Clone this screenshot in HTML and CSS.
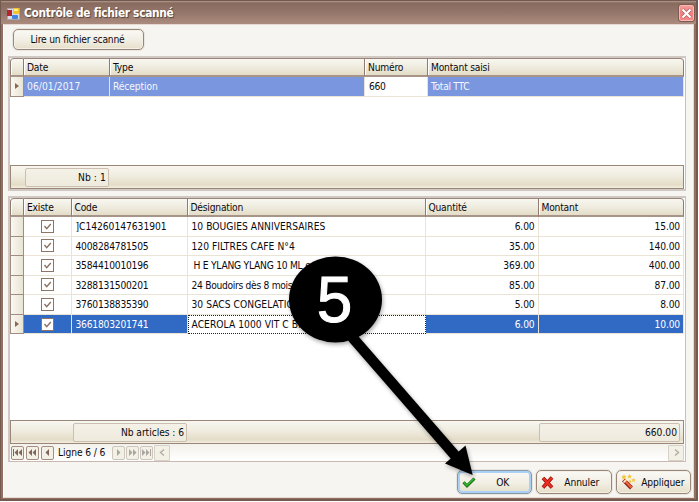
FILE: index.html
```html
<!DOCTYPE html>
<html lang="fr">
<head>
<meta charset="utf-8">
<title>Contrôle de fichier scanné</title>
<link rel="stylesheet" href="styles.css">
</head>
<body>
<div class="window">
  <header class="titlebar">
    <svg class="app-icon" width="13" height="13" viewBox="0 0 13 13"><rect x="0.5" y="1.5" width="12" height="11" fill="#d9dce4" stroke="#a9a6ac"/><rect x="0" y="3" width="5" height="6" fill="#b3262c"/><rect x="6" y="1" width="6" height="6" rx="1" fill="#f6c629"/><path d="M7 2h4v2H7z" fill="#fff08a"/><rect x="5" y="8" width="6" height="4" rx="1" fill="#3f86e2"/></svg>
    <h1>Contrôle de fichier scanné</h1>
    <button class="close" aria-label="Fermer"><svg width="15" height="15" viewBox="0 0 15 15"><path d="M3.5 3.5l8 8M11.5 3.5l-8 8" stroke="#a85c5a" stroke-width="3.4"/><path d="M3.5 3.5l8 8M11.5 3.5l-8 8" stroke="#fff" stroke-width="2.2"/></svg></button>
  </header>
  <main class="client">
    <button class="btn read">Lire un fichier scanné</button>

    <section class="panel files">
      <div class="row head"><span></span><span>Date</span><span>Type</span><span>Numéro</span><span>Montant saisi</span></div>
      <div class="row file"><span class="ind"><i></i></span><span class="date">06/01/2017</span><span class="type">Réception</span><span class="edit">660</span><span>Total TTC</span></div>
      <div class="space"></div>
      <div class="foot"><span class="sum nb">Nb : 1</span></div>
    </section>

    <section class="panel items">
      <div class="row head"><span></span><span>Existe</span><span>Code</span><span>Désignation</span><span>Quantité</span><span>Montant</span></div>
      <div class="row"><span class="ind"></span><span class="chk"><svg viewBox="0 0 11 11"><path d="M2.500 5l2.200 2.600L8.800 3"/></svg></span><span class="code wide">]C14260147631901</span><span class="caps">10 BOUGIES ANNIVERSAIRES</span><span class="num">6.00</span><span class="num">15.00</span></div>
      <div class="row"><span class="ind"></span><span class="chk"><svg viewBox="0 0 11 11"><path d="M2.500 5l2.200 2.600L8.800 3"/></svg></span><span class="code">4008284781505</span><span class="caps">120 FILTRES CAFE N°4</span><span class="num">35.00</span><span class="num">140.00</span></div>
      <div class="row"><span class="ind"></span><span class="chk"><svg viewBox="0 0 11 11"><path d="M2.500 5l2.200 2.600L8.800 3"/></svg></span><span class="code">3584410010196</span><span class="indent">H E YLANG YLANG 10 ML e</span><span class="num">369.00</span><span class="num">400.00</span></div>
      <div class="row"><span class="ind"></span><span class="chk"><svg viewBox="0 0 11 11"><path d="M2.500 5l2.200 2.600L8.800 3"/></svg></span><span class="code">3288131500201</span><span>24 Boudoirs dès 8 mois</span><span class="num">85.00</span><span class="num">87.00</span></div>
      <div class="row"><span class="ind"></span><span class="chk"><svg viewBox="0 0 11 11"><path d="M2.500 5l2.200 2.600L8.800 3"/></svg></span><span class="code">3760138835390</span><span class="caps">30 SACS CONGELATION</span><span class="num">5.00</span><span class="num">8.00</span></div>
      <div class="row selected"><span class="ind"><i></i></span><span class="chk"><svg viewBox="0 0 11 11"><path d="M2.500 5l2.200 2.600L8.800 3"/></svg></span><span class="code">3661803201741</span><span class="focus caps">ACEROLA 1000 VIT C BIO</span><span class="num">6.00</span><span class="num">10.00</span></div>
      <div class="space"></div>
      <div class="foot"><span class="sum articles">Nb articles : 6</span><span class="sum total">660.00</span></div>
      <div class="nav">
        <button><svg viewBox="0 0 11 11"><path d="M1 2h1v7H1zM6 2v7L2.5 5.500zM10 2v7L6.500 5.500z"/></svg></button>
        <button class="second"><svg viewBox="0 0 11 11"><path d="M5 2v7L1.500 5.500zM9 2v7L5.500 5.500z"/></svg></button>
        <button class="third"><svg viewBox="0 0 11 11"><path d="M7 2v7L3.500 5.500z"/></svg></button>
        <span class="line">Ligne 6 / 6</span>
        <button class="off"><svg viewBox="0 0 11 11"><path d="M4 2v7l3.500-3.500z"/></svg></button>
        <button class="off"><svg viewBox="0 0 11 11"><path d="M2 2v7l3.500-3.500zM6 2v7l3.500-3.500z"/></svg></button>
        <button class="off"><svg viewBox="0 0 11 11"><path d="M1 2v7l3.500-3.500zM5 2v7l3.500-3.500zM9 2h1v7H9z"/></svg></button>
        <button class="scroll"><svg viewBox="0 0 11 11"><path d="M7 2.500l-3.500 3L7 8.500"/></svg></button>
        <button class="scroll right"><svg viewBox="0 0 11 11"><path d="M4 2.500l3.500 3L4 8.500"/></svg></button>
      </div>
    </section>

    <footer class="actions">
      <button class="btn ok"><svg width="14" height="12" viewBox="0 0 14 12"><path d="M1.500 6.200L5 9.800 12.500 2.500" fill="none" stroke="#176b17" stroke-width="3"/><path d="M1.800 6.300L5 9.300 12 2.700" fill="none" stroke="#35b52f" stroke-width="1.600"/></svg><span>OK</span></button>
      <button class="btn cancel"><svg width="13" height="13" viewBox="0 0 13 13"><path d="M2 2l9 9.500M11 1.500L2 11.500" stroke="#8e1009" stroke-width="3.600"/><path d="M2 2l9 9.500M11 1.500L2 11.500" stroke="#ee2c20" stroke-width="2.200"/></svg><span>Annuler</span></button>
      <button class="btn apply"><svg width="16" height="16" viewBox="0 0 16 16"><path d="M2.500 6l8 8" stroke="#8e2418" stroke-width="4"/><path d="M3 6l7.500 7.500" stroke="#f0653f" stroke-width="2.200"/><path d="M2.500 8.500l3.500-3.500" stroke="#fff0cf" stroke-width="1.600"/><path d="M3 0l.8 1.900 1.900.3-1.400 1.300.3 2L3 4.500l-1.700 1 .3-2L.3 2.200l1.900-.3zM8.500 0l.7 1.500 1.700.2-1.200 1.100.3 1.700-1.500-.8-1.500.8.3-1.700L6.100 1.700l1.700-.2zM12.500 4l.7 1.300 1.500.2-1.100 1 .3 1.500-1.400-.7-1.400.7.3-1.500-1.100-1 1.500-.2zM9 5.500l.6 1.200 1.200.2-.9.9.2 1.200-1.100-.6-1.100.6.200-1.200-.9-.9 1.200-.2z" fill="#f5c63a"/></svg><span>Appliquer</span></button>
    </footer>
  </main>
</div>
<svg class="callout" width="699" height="502" viewBox="0 0 699 502">
  <path d="M352 337L459 460" stroke="#000" stroke-width="10.500"/>
  <path d="M472.700 475L465.500 445.500L445 463.500z"/>
  <ellipse cx="335.500" cy="299.500" rx="46.500" ry="43"/>
  <text x="334.500" y="322" text-anchor="middle">5</text>
</svg>
</body>
</html>
```
FILE: styles.css
```css
* { box-sizing: border-box; }
body { margin: 0; background: #fff; overflow: hidden; font: 10.2px/14px "DejaVu Sans Condensed", "DejaVu Sans", sans-serif; font-stretch: condensed; letter-spacing: -0.3px; color: #0c0a10; }
button { font: inherit; letter-spacing: inherit; color: inherit; padding: 0; margin: 0; }
.window { width: 698px; height: 501px; display: flex; flex-direction: column; background: #93705f; border: 1px solid #735a51; border-right-width: 2px; border-bottom-width: 2px; padding: 0 2px 1px; }
.titlebar { height: 23px; flex: none; display: flex; align-items: center; background: linear-gradient(#b59a8d 0, #876a5e 2px, #95766a 50%, #aa8b7d 100%); margin: 0 -2px; padding: 1px 1px 0 6px; }
.titlebar h1 { margin: 0 0 0 4px; font: bold 11.8px/16px "DejaVu Sans Condensed", "DejaVu Sans", sans-serif; font-stretch: condensed; letter-spacing: -0.3px; color: #fff; text-shadow: 1px 1px 1px #55413a; }
.close { margin-left: auto; width: 17px; height: 18px; border: 1px solid #7c5a52; border-radius: 3px; background: linear-gradient(#f5a19b, #f07f80 50%, #f58a88); box-shadow: inset 0 0 0 1px #fbb9b2; display: flex; align-items: center; justify-content: center; }
.client { flex: 1; min-height: 0; display: flex; flex-direction: column; background: #f6f5f1; border: 1px solid #e5d9d2; border-left-color: #fff; padding: 4px 8px 3px 4px; }
.btn { display: flex; align-items: center; border: 1px solid #9a8779; border-radius: 5px; background: linear-gradient(#faf9f5, #f1eee3 55%, #e5dec9); box-shadow: inset 0 0 0 1px #f3f0e5, 0 0 0 1px #e9e5df; }
.read { width: 131px; height: 22px; margin-left: 5px; padding: 1px 2px 0 0; justify-content: center; letter-spacing: -0.2px; }
.panel { width: 678px; flex: none; display: flex; flex-direction: column; background: #fff; border: 2px solid #d0c8c2; border-right: 1px solid #c9c1bb; padding: 0 1px 0 0; }
.files { height: 135px; margin-top: 6px; }
.items { height: 266px; margin-top: 5px; border-bottom: 1px solid #c9b9b1; }
.row { display: grid; height: 19.550px; flex: none; }
.files .row { grid-template-columns: 14px 86px 255px 63px 1fr; }
.items .row { grid-template-columns: 14px 47.500px 116px 238px 113px 1fr; }
.row > span { min-width: 0; white-space: nowrap; overflow: hidden; padding-left: 4px; border-right: 1px solid #e9e4d6; border-bottom: 1px solid #e9e4d6; line-height: 19px; }
.row.head { height: 19px; }
.row.head > span { border-top: 1px solid #9a857b; border-right: 1px solid #917a70; border-bottom: 2px solid #a8958a; background: linear-gradient(#f8f7f0, #efecdf 50%, #e4dcc7); box-shadow: inset 1px 0 #fff; line-height: 17px; padding-left: 3px; letter-spacing: -0.2px; }
.row.head > span:first-child { border-left: 1px solid #917a70; border-top-left-radius: 4px; }
.row.head > span:last-child { border-top-right-radius: 4px; }
.row > .ind { background: linear-gradient(90deg, #f9f8f2, #e9e4d4); border: 1px solid #a08c80; border-top: 0; padding: 0; display: flex; align-items: center; justify-content: center; }
.ind i { border-left: 4px solid #87695c; border-top: 3px solid transparent; border-bottom: 3px solid transparent; }
.row.file > span:not(.ind) { background: #7996df; color: #f4f6fd; padding-left: 3px; }
.row.file > .date { letter-spacing: 0.05px; }
.row.file > .type { letter-spacing: -0.1px; }
.row.file > .edit:not(.ind) { background: #fff; color: #0c0a10; padding-left: 4px; }
.space { flex: 1; }
.foot { height: 24px; flex: none; display: flex; align-items: center; border: 1px solid #9a8779; background: linear-gradient(#f8f7f0, #efecdf 45%, #e4dcc7 85%, #f1edde); }
.sum { height: 19px; line-height: 18px; border: 1px solid #cbbfb1; border-radius: 2px; text-align: right; padding-right: 2px; background: linear-gradient(#f4f1e7, #eeeadd); }
.sum.nb { width: 84px; margin-left: 14px; letter-spacing: 0.1px; }
.sum.articles { width: 114px; margin-left: 62px; letter-spacing: -0.05px; }
.sum.total { width: 141px; margin: 0 3px 0 auto; letter-spacing: 0; }
.row > .chk { display: flex; align-items: center; justify-content: center; padding: 0; }
.chk svg { width: 13px; height: 13px; border: 1px solid #8e7465; background: #fff; }
.chk path { fill: none; stroke: #8c7060; stroke-width: 1.400; }
.code { letter-spacing: -0.22px; }
.code.wide { letter-spacing: -0.03px; }
.caps { letter-spacing: 0.04px; }
.row > .indent { padding-left: 6px; letter-spacing: -0.25px; }
.row > .num { text-align: right; padding-right: 3px; letter-spacing: -0.15px; }
.selected > span:not(.ind) { background: #316ac5; color: #fff; }
.selected > .focus:not(.ind) { background: #fff; color: #0c0a10; border: 1px dotted #222; padding-left: 3px; line-height: 17px; }
.nav { height: 17px; flex: none; display: flex; align-items: center; background: linear-gradient(#f3f1eb, #fff); }
.nav button { width: 13px; height: 14px; border: 1px solid #a48e82; border-radius: 2px; background: #f3f0e6; display: flex; align-items: center; justify-content: center; margin: 0 0 0 1px; }
.nav button svg { width: 11px; height: 11px; flex: none; fill: #80655a; }
.nav .second, .nav .third { margin-left: 2px; }
.nav .line { width: 57px; padding: 1px 0 0 4px; letter-spacing: -0.1px; }
.nav .off { border-color: #ccc6bf; }
.nav .off svg { fill: #aaa7a2; }
.nav .scroll { width: 16px; height: 16px; border-color: #d6d0c8; border-radius: 1px; }
.nav .scroll svg { fill: none; stroke: #b1aca5; stroke-width: 1.400; }
.nav .right { margin-left: auto; }
.actions { display: flex; margin: 8px -6px 0 0; justify-content: flex-end; gap: 4px; }
.actions .btn { width: 75.500px; height: 24px; padding-left: 4px; }
.actions span { flex: 1; text-align: center; padding: 2px 1px 0 0; letter-spacing: -0.1px; }
.ok { border-color: #8b98a5; box-shadow: inset 0 0 0 2px #a9d0f6, 0 0 0 1px #e9e5df; }
.callout { position: absolute; left: 0; top: 0; filter: drop-shadow(1px 2px 2px rgba(0, 0, 0, 0.35)); pointer-events: none; }
.callout text { font: 64px "Liberation Sans", sans-serif; letter-spacing: 0; fill: #fff; stroke: #fff; stroke-width: 1; }
```
